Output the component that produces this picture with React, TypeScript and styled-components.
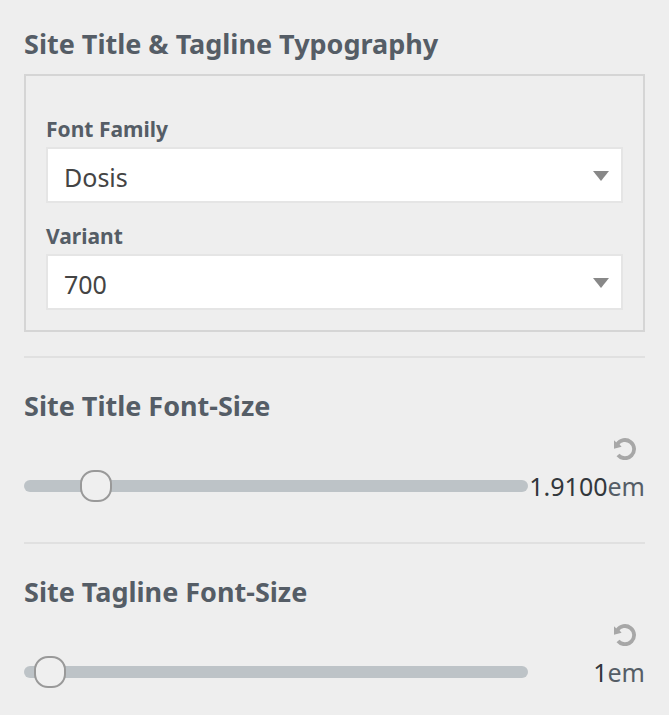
import React, { useId, useState } from "react";
import styled, { createGlobalStyle } from "styled-components";

const GlobalStyle = createGlobalStyle`
  *, *::before, *::after {
    box-sizing: border-box;
  }
  body {
    margin: 0;
    background: #eeeeee;
    color: #555d66;
    font-family: "Noto Sans", "Open Sans", sans-serif;
    font-size: 25px;
  }
`;

const Panel = styled.main`
  display: flex;
  flex-direction: column;
  gap: 24px;
  padding: 24px;
`;

const Section = styled.section<{ $divided?: boolean }>`
  display: flex;
  flex-direction: column;
  padding-top: ${(p) => (p.$divided ? "28px" : "0")};
  border-top: ${(p) => (p.$divided ? "2px solid #e0e0e0" : "0")};
`;

const Heading = styled.h2`
  margin: 0;
  font-size: 27px;
  line-height: 40px;
  font-weight: 700;
`;

const HeadingLabel = styled.label`
  font-size: 27px;
  line-height: 40px;
  font-weight: 700;
`;

const Group = styled.div`
  display: flex;
  flex-direction: column;
  gap: 17px;
  margin-top: 10px;
  padding: 37px 20px 20px;
  border: 2px solid #d5d5d5;
`;

const Field = styled.div`
  display: flex;
  flex-direction: column;
  gap: 2px;
`;

const FieldLabel = styled.label`
  font-size: 21px;
  line-height: 32px;
  font-weight: 700;
`;

const SelectBox = styled.div`
  display: grid;
  align-items: center;
`;

const Select = styled.select`
  grid-area: 1 / 1;
  width: 100%;
  height: 56px;
  margin: 0;
  padding: 4px 48px 0 16px;
  appearance: none;
  border: 2px solid #e5e5e5;
  border-radius: 0;
  background: #ffffff;
  color: #444444;
  font: inherit;
`;

const Arrow = styled.svg`
  grid-area: 1 / 1;
  justify-self: end;
  width: 16px;
  height: 10px;
  margin: 2px 14px 0 0;
  pointer-events: none;
  fill: #888888;
`;

const ResetButton = styled.button`
  align-self: flex-end;
  display: flex;
  margin: 12px 9px 0 0;
  padding: 0;
  border: 0;
  background: none;
  color: #a7a7a7;
  cursor: pointer;
`;

const SliderRow = styled.div`
  display: grid;
  grid-template-columns: minmax(0, 1fr) 117px;
  align-items: center;
  height: 52px;
  margin-bottom: 6px;
`;

const Slider = styled.input`
  width: 100%;
  height: 12px;
  margin: 0;
  appearance: none;
  border-radius: 6px;
  background: #bdc3c7;

  &::-webkit-slider-thumb {
    appearance: none;
    width: 32px;
    height: 32px;
    border: 2px solid #999999;
    border-radius: 14px;
    background: #efefef;
  }
`;

const Value = styled.div`
  display: flex;
  align-items: baseline;
  line-height: 36px;
`;

const NumberInput = styled.input`
  flex: 1;
  min-width: 0;
  margin: 0;
  padding: 0;
  border: 0;
  background: none;
  color: #32373c;
  font: inherit;
  text-align: right;
`;

function SelectField({ label, options }: { label: string; options: string[] }) {
  const id = useId();
  return (
    <Field>
      <FieldLabel htmlFor={id}>{label}</FieldLabel>
      <SelectBox>
        <Select id={id} defaultValue={options[0]}>
          {options.map((option) => (
            <option key={option}>{option}</option>
          ))}
        </Select>
        <Arrow viewBox="0 0 16 10" aria-hidden="true">
          <path d="M0 0h16L8 10z" />
        </Arrow>
      </SelectBox>
    </Field>
  );
}

function SizeControl({ label, initial }: { label: string; initial: string }) {
  const id = useId();
  const [value, setValue] = useState(initial);
  return (
    <Section $divided>
      <HeadingLabel htmlFor={id}>{label}</HeadingLabel>
      <ResetButton type="button" aria-label={`Reset ${label}`} onClick={() => setValue(initial)}>
        <svg width="22" height="22" viewBox="0 0 22 22" aria-hidden="true">
          <path d="M3.2 6.4A9.1 9.1 0 1 1 4 17" fill="none" stroke="currentColor" strokeWidth="3.8" />
          <path d="M0 2.2L2.4 4.4L5.6 6.6L7.6 8.8L0 10.8z" fill="currentColor" />
        </svg>
      </ResetButton>
      <SliderRow>
        <Slider
          id={id}
          type="range"
          min="0.8"
          max="10.15"
          step="any"
          value={value}
          onChange={(e) => setValue(e.target.value)}
        />
        <Value>
          <NumberInput
            type="text"
            aria-label={`${label} value`}
            value={value}
            onChange={(e) => setValue(e.target.value)}
          />
          <span>em</span>
        </Value>
      </SliderRow>
    </Section>
  );
}

export default function App() {
  return (
    <>
      <GlobalStyle />
      <Panel>
        <Section>
          <Heading>Site Title &amp; Tagline Typography</Heading>
          <Group>
            <SelectField label="Font Family" options={["Dosis", "Lato", "Roboto"]} />
            <SelectField label="Variant" options={["700", "400", "300"]} />
          </Group>
        </Section>
        <SizeControl label="Site Title Font-Size" initial="1.9100" />
        <SizeControl label="Site Tagline Font-Size" initial="1" />
      </Panel>
    </>
  );
}
